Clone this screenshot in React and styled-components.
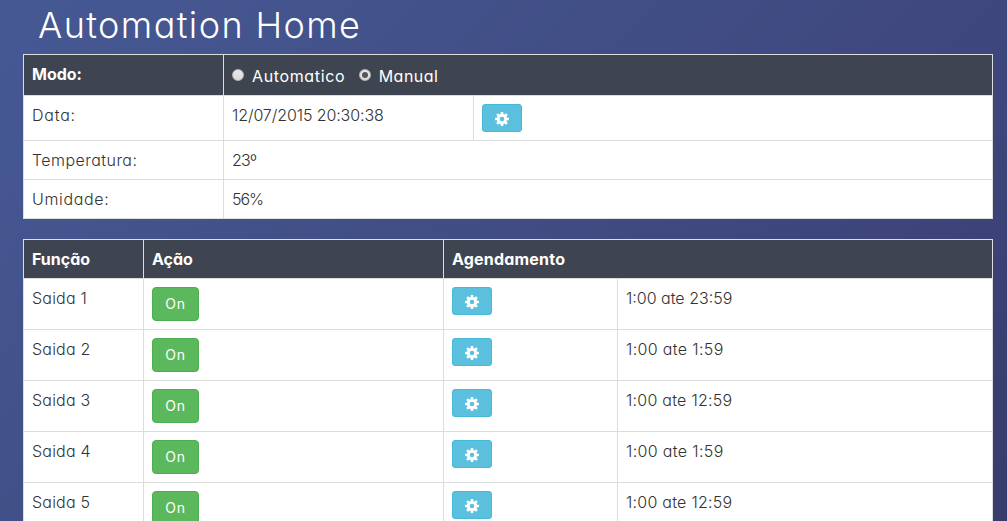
import React from "react";
import styled, { createGlobalStyle } from "styled-components";

const GlobalStyle = createGlobalStyle`
  * { box-sizing: border-box; }
  html, body { height: 100%; }
  body {
    margin: 0;
    overflow: hidden;
    background: linear-gradient(135deg, #465994 0%, #3e477d 68%, #383b6c 100%);
    color: #333;
    font-family: Inter, sans-serif;
    font-feature-settings: "cv11";
    font-size: 16px;
    font-weight: 300;
    line-height: 22px;
  }
`;

const Page = styled.main`
  width: 1007px;
  height: 521px;
  overflow: hidden;
  padding: 0 14px 0 23px;
`;

const Title = styled.h1`
  margin: 0;
  height: 54px;
  padding: 5px 0 0 15px;
  color: #fff;
  font-size: 36px;
  font-weight: 300;
  line-height: 40px;
  white-space: nowrap;
`;

const Table = styled.section`
  width: 970px;
  margin-bottom: 20px;
  border: 1px solid #ddd;
  border-bottom: 0;
  background: #fff;
`;

const Row = styled.div`
  display: grid;
  grid-template-columns: ${(p) => p.$columns};
  height: ${(p) => p.$height}px;
  border-bottom: 1px solid #ddd;
  background: ${(p) => (p.$dark ? "#3f4550" : "#fff")};
  color: ${(p) => (p.$dark ? "#fff" : "#333")};
`;

const Cell = styled.div`
  display: flex;
  align-items: flex-start;
  padding: 8px;
  white-space: nowrap;
  font-weight: ${(p) => (p.$bold ? 700 : 300)};

  & + & { border-left: 1px solid #ddd; }
`;

const Text = styled.span`
  letter-spacing: ${(p) => p.$track || 0}px;
`;

const Option = styled.label`
  display: flex;
  align-items: center;
  height: 24px;
  margin-right: 13.5px;
  padding-top: 2px;
  font-weight: 400;
`;

const Radio = styled.span`
  display: grid;
  place-items: center;
  width: 12px;
  height: 12px;
  margin: -3px 8px 0 0;
  border: 1px solid #b5b5b5;
  border-radius: 50%;
  background: linear-gradient(#e8e8e8, #dcdcdc);

  &::after {
    content: "";
    width: 6px;
    height: 6px;
    border-radius: 50%;
    background: ${(p) => (p.$checked ? "#555" : "transparent")};
  }
`;

const Button = styled.button`
  display: flex;
  align-items: center;
  justify-content: center;
  padding: 0;
  border: 1px solid;
  color: #fff;
  font: inherit;
`;

const GearButton = styled(Button)`
  width: 40px;
  height: 28px;
  border-color: #46b8da;
  border-radius: 3px;
  background: #5bc0de;

  svg { width: 14px; height: 14px; margin-top: 2px; }
`;

const OnButton = styled(Button)`
  width: 47px;
  height: 34px;
  border-color: #4cae4c;
  border-radius: 4px;
  background: #5cb85c;
  font-size: 14px;
  font-weight: 400;
`;

const Gear = () => (
  <GearButton aria-label="Configurar">
    <svg viewBox="0 0 14 14" aria-hidden="true">
      <g fill="#fff">
        {[0, 45, 90, 135].map((angle) => (
          <rect key={angle} x="5.7" y="0" width="2.6" height="14" rx=".4" transform={`rotate(${angle} 7 7)`} />
        ))}
        <circle cx="7" cy="7" r="5.2" />
      </g>
      <circle cx="7" cy="7" r="2.3" fill="#5bc0de" />
    </svg>
  </GearButton>
);

const outputs = [
  ["Saida 1", "1:00 ate 23:59", 0],
  ["Saida 2", "1:00 ate 1:59", 0.35],
  ["Saida 3", "1:00 ate 12:59", 0.25],
  ["Saida 4", "1:00 ate 1:59", 0.35],
  ["Saida 5", "1:00 ate 12:59", 0.25],
];

const INFO = "199px 1fr";

export default function App() {
  return (
    <>
      <GlobalStyle />
      <Page>
        <Title><Text $track={1.4}>Automation Home</Text></Title>
        <Table>
          <Row $columns={INFO} $height={41} $dark>
            <Cell $bold><Text>Modo:</Text></Cell>
            <Cell>
              <Option><Radio /><Text $track={0.63}>Automatico</Text></Option>
              <Option><Radio $checked /><Text $track={0.5}>Manual</Text></Option>
            </Cell>
          </Row>
          <Row $columns="199px 250px 1fr" $height={45}>
            <Cell><Text $track={0.8}>Data:</Text></Cell>
            <Cell><Text $track={-0.1}>12/07/2015 20:30:38</Text></Cell>
            <Cell><Gear /></Cell>
          </Row>
          <Row $columns={INFO} $height={39}>
            <Cell><Text $track={0.45}>Temperatura:</Text></Cell>
            <Cell><Text $track={-0.7}>23º</Text></Cell>
          </Row>
          <Row $columns={INFO} $height={39}>
            <Cell><Text $track={0.65}>Umidade:</Text></Cell>
            <Cell><Text $track={-1}>56%</Text></Cell>
          </Row>
        </Table>
        <Table>
          <Row $columns="119px 300px 1fr" $height={39} $dark>
            <Cell $bold><Text>Função</Text></Cell>
            <Cell $bold><Text>Ação</Text></Cell>
            <Cell $bold><Text $track={0.2}>Agendamento</Text></Cell>
          </Row>
          {outputs.map(([name, schedule, track]) => (
            <Row key={name} $columns="119px 300px 174px 1fr" $height={51}>
              <Cell><Text $track={0.2}>{name}</Text></Cell>
              <Cell><OnButton><Text $track={0.7}>On</Text></OnButton></Cell>
              <Cell><Gear /></Cell>
              <Cell><Text $track={track}>{schedule}</Text></Cell>
            </Row>
          ))}
        </Table>
      </Page>
    </>
  );
}
